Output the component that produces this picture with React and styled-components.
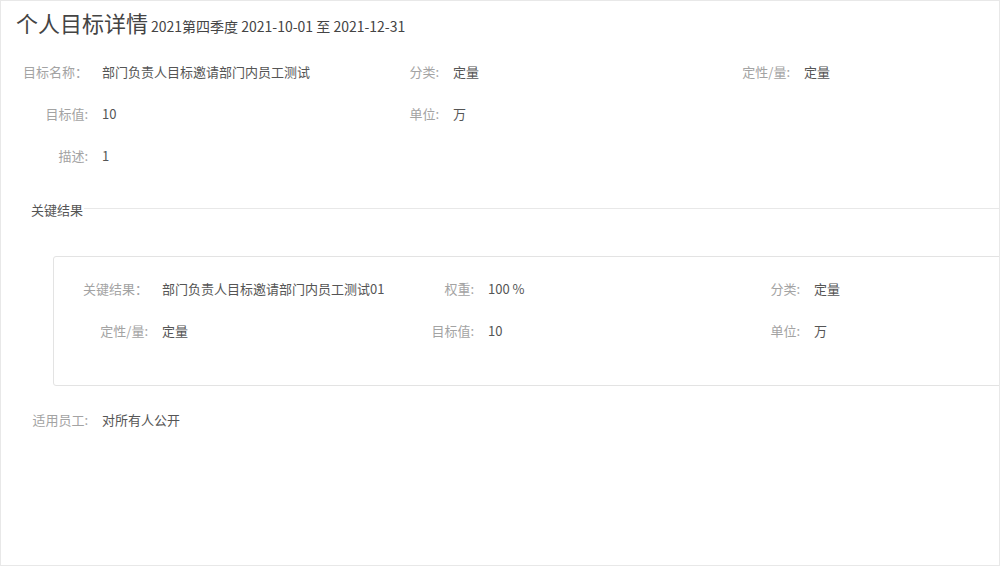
import React from "react";
import styled, { createGlobalStyle } from "styled-components";

const GlobalStyle = createGlobalStyle`
  html, body {
    margin: 0;
    padding: 0;
    background: #fff;
  }
  body {
    font-family: "Noto Sans CJK SC", "Noto Sans", sans-serif;
    font-size: 13px;
    color: #555;
  }
`;

const Page = styled.div`
  box-sizing: border-box;
  width: 1000px;
  height: 566px;
  border: 1px solid #e8e8e8;
  overflow: hidden;
  background: #fff;
`;

const Header = styled.div`
  display: flex;
  align-items: baseline;
  padding: 9px 15px 0;
  height: 24px;
`;

const Title = styled.h1`
  margin: 0;
  font-size: 22px;
  line-height: 24px;
  font-weight: 400;
  color: #444;
`;

const Period = styled.span`
  margin-left: 3px;
  font-size: 14px;
  color: #444;
`;

const InfoGrid = styled.div`
  display: grid;
  grid-template-columns: ${(p) => p.$cols};
  grid-auto-rows: 42px;
  margin-top: ${(p) => p.$top || 0}px;
`;

const Field = styled.div`
  display: flex;
  align-items: center;
  white-space: nowrap;
`;

const Label = styled.span`
  flex: none;
  width: ${(p) => p.$w}px;
  margin-right: 14px;
  text-align: right;
  color: #a3a3a3;
  line-height: 20px;
`;

const Value = styled.span`
  color: #555;
  line-height: 20px;
`;

const Divider = styled.div`
  display: flex;
  align-items: center;
  height: 20px;
  margin-top: 23px;
  padding-left: 30px;
`;

const DividerText = styled.span`
  color: #555;
  line-height: 20px;
  padding-right: 1px;
`;

const DividerLine = styled.div`
  flex: 1;
  height: 0;
  border-top: 1px solid #e8e8e8;
  margin-top: -3px;
`;

const Card = styled.div`
  margin: 36px -40px 0 52px;
  border: 1px solid #e3e3e3;
  border-radius: 3px;
  padding: 11px 0 33px;
`;

const Employees = styled.div`
  margin-top: 13px;
`;

const F = ({ label, value, w }) => (
  <Field>
    <Label $w={w}>{label}</Label>
    <Value>{value}</Value>
  </Field>
);

const topFields = [
  ["目标名称：", "部门负责人目标邀请部门内员工测试"],
  ["分类:", "定量"],
  ["定性/量:", "定量"],
  ["目标值:", "10"],
  ["单位:", "万"],
  null,
  ["描述:", "1"],
];

const krFields = [
  ["关键结果：", "部门负责人目标邀请部门内员工测试01"],
  ["权重:", "100 %"],
  ["分类:", "定量"],
  ["定性/量:", "定量"],
  ["目标值:", "10"],
  ["单位:", "万"],
];

export default function App() {
  return (
    <>
      <GlobalStyle />
      <Page>
        <Header>
          <Title>个人目标详情</Title>
          <Period>2021第四季度 2021-10-01 至 2021-12-31</Period>
        </Header>
        <InfoGrid $cols="351px 351px 1fr" $top={17}>
          {topFields.map((f, i) =>
            f ? <F key={i} w={87} label={f[0]} value={f[1]} /> : <div key={i} />
          )}
        </InfoGrid>
        <Divider>
          <DividerText>关键结果</DividerText>
          <DividerLine />
        </Divider>
        <Card>
          <InfoGrid $cols="326px 326px 1fr">
            {krFields.map((f, i) => (
              <F key={i} w={94} label={f[0]} value={f[1]} />
            ))}
          </InfoGrid>
        </Card>
        <Employees>
          <InfoGrid $cols="1fr">
            <F w={87} label="适用员工:" value="对所有人公开" />
          </InfoGrid>
        </Employees>
      </Page>
    </>
  );
}
